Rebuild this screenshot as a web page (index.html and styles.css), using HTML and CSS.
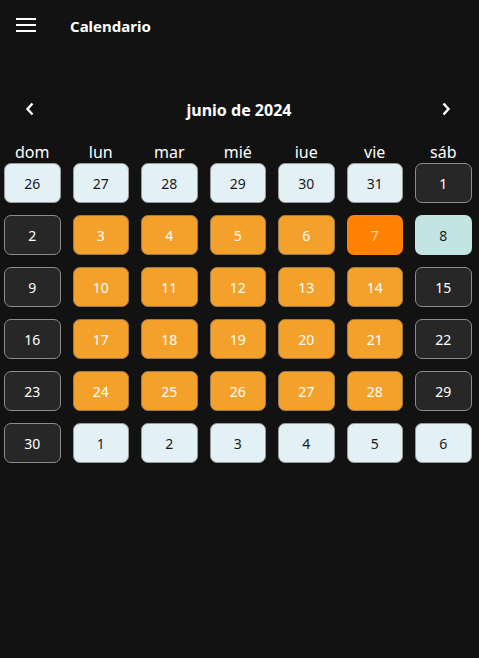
FILE: index.html
```html
<!DOCTYPE html>
<html lang="es">
<head>
<meta charset="utf-8">
<link rel="stylesheet" href="styles.css">
</head>
<body>
<header class="appbar">
  <svg class="menu" width="20" height="14" viewBox="0 0 20 14"><rect x="0" y="0" width="20" height="2" fill="#fff"/><rect x="0" y="6" width="20" height="2" fill="#fff"/><rect x="0" y="12" width="20" height="2" fill="#fff"/></svg>
  <span class="title">Calendario</span>
</header>
<div class="nav">
  <svg class="chev" width="10" height="14" viewBox="0 0 10 14"><path d="M7.5 1.5 L2.5 7 L7.5 12.5" fill="none" stroke="#fff" stroke-width="2.4"/></svg>
  <span class="month">junio de 2024</span>
  <svg class="chev" width="10" height="14" viewBox="0 0 10 14"><path d="M2.5 1.5 L7.5 7 L2.5 12.5" fill="none" stroke="#fff" stroke-width="2.4"/></svg>
</div>
<div class="weekdays">
  <div class="wd">dom</div><div class="wd">lun</div><div class="wd">mar</div><div class="wd">mié</div><div class="wd">iue</div><div class="wd">vie</div><div class="wd">sáb</div>
</div>
<div class="grid">
  <div class="d out">26</div><div class="d out">27</div><div class="d out">28</div><div class="d out">29</div><div class="d out">30</div><div class="d out">31</div><div class="d we">1</div>
  <div class="d we">2</div><div class="d wk">3</div><div class="d wk">4</div><div class="d wk">5</div><div class="d wk">6</div><div class="d today">7</div><div class="d sel">8</div>
  <div class="d we">9</div><div class="d wk">10</div><div class="d wk">11</div><div class="d wk">12</div><div class="d wk">13</div><div class="d wk">14</div><div class="d we">15</div>
  <div class="d we">16</div><div class="d wk">17</div><div class="d wk">18</div><div class="d wk">19</div><div class="d wk">20</div><div class="d wk">21</div><div class="d we">22</div>
  <div class="d we">23</div><div class="d wk">24</div><div class="d wk">25</div><div class="d wk">26</div><div class="d wk">27</div><div class="d wk">28</div><div class="d we">29</div>
  <div class="d we">30</div><div class="d out">1</div><div class="d out">2</div><div class="d out">3</div><div class="d out">4</div><div class="d out">5</div><div class="d out">6</div>
</div>
</body>
</html>
```
FILE: styles.css
```css
html, body {
  margin: 0;
  padding: 0;
  background: #121212;
  color: #fff;
  font-family: "Noto Sans", "Open Sans", sans-serif;
  height: 100%;
}
.appbar {
  height: 52px;
  display: flex;
  align-items: center;
  padding-left: 16px;
  box-sizing: border-box;
}
.menu {
  display: block;
  margin-top: -2px;
}
.title {
  margin-left: 34px;
  font-weight: 700;
  font-size: 15px;
  margin-top: -1px;
}
.nav {
  margin-top: 42px;
  height: 30px;
  display: flex;
  align-items: center;
  justify-content: space-between;
  padding: 0 28px 0 25px;
}
.chev { display: block; }
.month {
  font-weight: 700;
  font-size: 16px;
  margin-left: 2px;
  margin-top: 1px;
}
.weekdays,
.grid {
  padding-left: 4px;
  display: grid;
  grid-template-columns: repeat(7, 56.5px);
  column-gap: 12px;
}
.weekdays {
  margin-top: 17px;
  height: 22px;
}
.grid {
  grid-template-rows: repeat(6, 40px);
  row-gap: 12px;
}
.wd {
  text-align: center;
  font-size: 16px;
  line-height: 22px;
}
.d {
  box-sizing: border-box;
  border-radius: 7px;
  display: flex;
  align-items: center;
  justify-content: center;
  font-size: 14px;
  border: 1px solid #8a8a8a;
}
.out { background: #e3f1f6; color: #1a1a1a; border-color: #9a9a9a; }
.we { background: #272727; color: #fff; border-color: #8c8c8c; }
.wk { background: #f3a12b; color: #fff; border-color: #9a7a50; }
.today { background: #ff8204; color: #ffd3a0; border: none; }
.sel { background: #c2e4e2; color: #1a1a1a; border: none; }
```
